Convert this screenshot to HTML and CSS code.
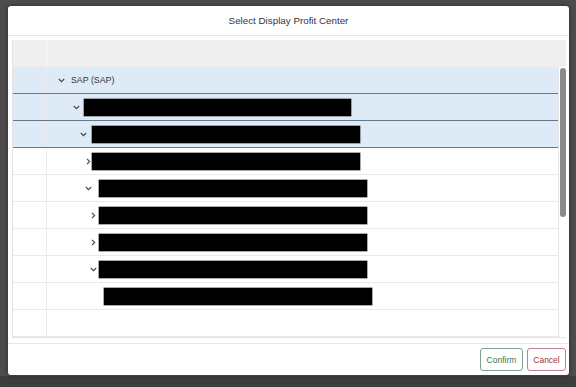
FILE: index.html
```html
<!DOCTYPE html>
<html lang="en">
<head>
<meta charset="utf-8">
<title>Select Display Profit Center</title>
<link rel="stylesheet" href="styles.css">
</head>
<body>
<div class="dialog">
  <div class="header"><span class="title">Select Display Profit Center</span></div>
  <div class="content">
    <div class="table">
      <div class="thead">
        <div class="sel"></div>
        <div class="hcell"></div>
      </div>
      <div class="tbody">
        <div class="rows">
          <div class="row selected">
            <div class="sel"></div>
            <div class="cell" style="padding-left:10px">
              <span class="chev"><svg width="7" height="5" viewBox="0 0 7 5"><path d="M0.8 1 L3.5 3.7 L6.2 1" /></svg></span>
              <span class="label" style="margin-left:6px">SAP (SAP)</span>
            </div>
          </div>
          <div class="row selected">
            <div class="sel"></div>
            <div class="cell" style="padding-left:25px">
              <span class="chev"><svg width="7" height="5" viewBox="0 0 7 5"><path d="M0.8 1 L3.5 3.7 L6.2 1" /></svg></span>
              <span class="bar" style="margin-left:4px;width:267px"></span>
            </div>
          </div>
          <div class="row selected">
            <div class="sel"></div>
            <div class="cell" style="padding-left:32px">
              <span class="chev"><svg width="7" height="5" viewBox="0 0 7 5"><path d="M0.8 1 L3.5 3.7 L6.2 1" /></svg></span>
              <span class="bar" style="margin-left:5px;width:268px"></span>
            </div>
          </div>
          <div class="row">
            <div class="sel"></div>
            <div class="cell" style="padding-left:37px">
              <span class="chev"><svg width="5" height="7" viewBox="0 0 5 7"><path d="M1 0.8 L3.7 3.5 L1 6.2" /></svg></span>
              <span class="bar" style="margin-left:0;width:268px"></span>
            </div>
          </div>
          <div class="row">
            <div class="sel"></div>
            <div class="cell" style="padding-left:37px">
              <span class="chev"><svg width="7" height="5" viewBox="0 0 7 5"><path d="M0.8 1 L3.5 3.7 L6.2 1" /></svg></span>
              <span class="bar" style="margin-left:7px;width:268px"></span>
            </div>
          </div>
          <div class="row">
            <div class="sel"></div>
            <div class="cell" style="padding-left:42px">
              <span class="chev"><svg width="5" height="7" viewBox="0 0 5 7"><path d="M1 0.8 L3.7 3.5 L1 6.2" /></svg></span>
              <span class="bar" style="margin-left:2px;width:268px"></span>
            </div>
          </div>
          <div class="row">
            <div class="sel"></div>
            <div class="cell" style="padding-left:42px">
              <span class="chev"><svg width="5" height="7" viewBox="0 0 5 7"><path d="M1 0.8 L3.7 3.5 L1 6.2" /></svg></span>
              <span class="bar" style="margin-left:2px;width:268px"></span>
            </div>
          </div>
          <div class="row">
            <div class="sel"></div>
            <div class="cell" style="padding-left:42px">
              <span class="chev"><svg width="7" height="5" viewBox="0 0 7 5"><path d="M0.8 1 L3.5 3.7 L6.2 1" /></svg></span>
              <span class="bar" style="margin-left:2px;width:268px"></span>
            </div>
          </div>
          <div class="row">
            <div class="sel"></div>
            <div class="cell" style="padding-left:57px">
              <span class="bar" style="margin-left:0;width:268px"></span>
            </div>
          </div>
          <div class="row">
            <div class="sel"></div>
            <div class="cell"></div>
          </div>
        </div>
        <div class="track"><div class="thumb"></div></div>
      </div>
    </div>
  </div>
  <div class="footer">
    <button class="btn confirm">Confirm</button>
    <button class="btn cancel">Cancel</button>
  </div>
</div>
</body>
</html>
```

FILE: styles.css
```css
html, body {
  margin: 0;
  padding: 0;
}
body {
  width: 576px;
  height: 387px;
  overflow: hidden;
  background: linear-gradient(to bottom, #4c4c4c 0, #4c4c4c 376px, #3d3d3d 376px);
  padding: 6px 0 0 8px;
  box-sizing: border-box;
  font-family: "Liberation Sans", Arial, sans-serif;
  color: #32363a;
}
.dialog {
  width: 561px;
  height: 369px;
  background: #fff;
  border-radius: 3px;
  box-shadow: 0 0 4px rgba(0, 0, 0, 0.45);
  display: flex;
  flex-direction: column;
}
.header {
  height: 29px;
  border-bottom: 1px solid #e6e6e6;
  display: flex;
  align-items: center;
  justify-content: center;
}
.title {
  font-size: 9.8px;
  color: #32363a;
}
.content {
  padding: 4px 3px 0 4px;
}
.table {
  width: 554px;
  border-left: 1px solid #e4e4e4;
  border-bottom: 1px solid #e4e4e4;
  box-sizing: border-box;
}
.thead {
  height: 27px;
  background: #efefef;
  display: flex;
}
.thead .sel {
  border-right: 1px solid #f8f8f8;
}
.sel {
  width: 33px;
  border-right: 1px solid #ececec;
  flex: none;
}
.hcell {
  flex: 1;
}
.tbody {
  display: flex;
  height: 270px;
}
.rows {
  width: 545px;
  flex: none;
  border-right: 1px solid #e6e6e6;
  display: flex;
  flex-direction: column;
}
.row {
  height: 26px;
  border-bottom: 1px solid #e9e9e9;
  display: flex;
}
.row.selected {
  background: #dfeaf7;
  border-bottom-color: #62788f;
}
.cell {
  flex: 1;
  display: flex;
  align-items: center;
}
.chev {
  width: 8px;
  height: 8px;
  flex: none;
  display: flex;
  align-items: center;
  justify-content: center;
}
.chev svg path {
  fill: none;
  stroke: #40464d;
  stroke-width: 1.1;
}
.label {
  font-size: 8.8px;
  color: #32363a;
}
.bar {
  height: 17px;
  background: #000;
  box-shadow: 0 0 0 0.5px #555;
  flex: none;
}
.track {
  flex: 1;
  padding: 1px 0 0 1px;
}
.thumb {
  width: 6px;
  height: 149px;
  border-radius: 3px;
  background: #8a8a8a;
}
.footer {
  margin-top: 5px;
  border-top: 1px solid #e6e6e6;
  padding: 4px 3px 4px 0;
  display: flex;
  justify-content: flex-end;
  gap: 4px;
}
.btn {
  height: 23px;
  padding: 0;
  background: #fff;
  border-radius: 3px;
  font-family: "Liberation Sans", Arial, sans-serif;
  font-size: 8.5px;
  cursor: pointer;
}
.confirm {
  width: 43px;
  border: 1px solid #7ea18c;
  color: #3a7656;
}
.cancel {
  width: 39px;
  border: 1px solid #bb848a;
  color: #a23643;
}
```
